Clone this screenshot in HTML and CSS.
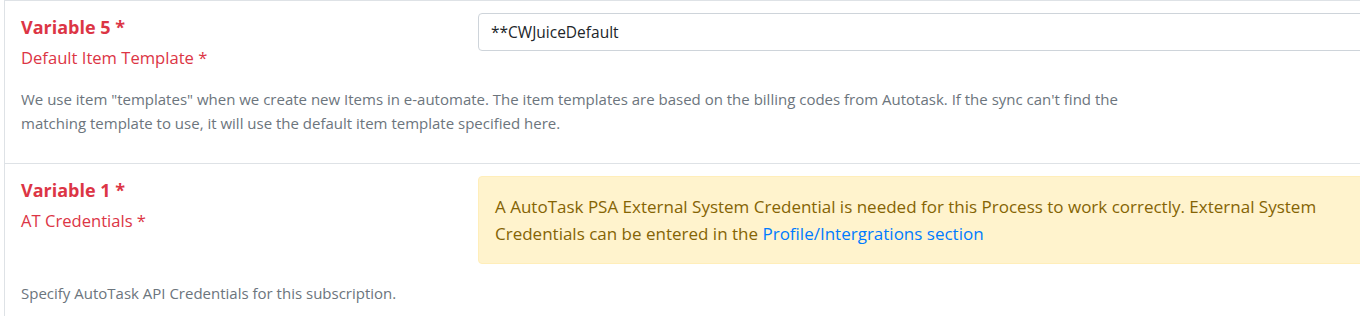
FILE: index.html
```html
<!DOCTYPE html>
<html lang="en">
<head>
    <meta charset="UTF-8">
    <meta name="viewport" content="width=device-width, initial-scale=1.0">
    <title>Process Variables</title>
    <link rel="stylesheet" href="styles.css">
</head>
<body>
    <div class="variables">
        <!-- Variable 5 -->
        <div class="variable-card">
            <div class="variable-row">
                <div class="variable-label">
                    <h5 class="variable-title">Variable 5 *</h5>
                    <label class="variable-name" for="defaultTemplate">Default Item Template *</label>
                </div>
                <div class="variable-field">
                    <input type="text" id="defaultTemplate" class="form-input" value="**CWJuiceDefault">
                </div>
            </div>
            <p class="variable-help">We use item "templates" when we create new Items in e-automate. The item templates are based on the billing codes from Autotask. If the sync can't find the matching template to use, it will use the default item template specified here.</p>
        </div>

        <!-- Variable 1 -->
        <div class="variable-card second">
            <div class="variable-row">
                <div class="variable-label">
                    <h5 class="variable-title">Variable 1 *</h5>
                    <div class="variable-name">AT Credentials *</div>
                </div>
                <div class="variable-field">
                    <div class="alert-warning">A AutoTask PSA External System Credential is needed for this Process to work correctly. External System Credentials can be entered in the <a href="#">Profile/Intergrations section</a></div>
                </div>
            </div>
            <p class="variable-help">Specify AutoTask API Credentials for this subscription.</p>
        </div>
    </div>
</body>
</html>
```

FILE: styles.css
```css
body {
    font-family: 'Open Sans', sans-serif;
    margin: 0;
    padding: 0;
    background-color: #fff;
    overflow: hidden;
}

.variables {
    padding-left: 4px;
    width: 1400px;
}

.variable-card {
    border: 1px solid #dee2e6;
    border-right: none;
    padding: 0 16px;
}

.variable-card.second {
    border-top: none;
}

.variable-row {
    display: flex;
}

.variable-label {
    width: 457px;
    flex-shrink: 0;
    padding-top: 15px;
}

.variable-title {
    margin: 0 0 7px;
    font-size: 18px;
    font-weight: bold;
    line-height: 23px;
    color: #dc3545;
}

.variable-name {
    display: block;
    font-size: 16.6px;
    line-height: 24px;
    color: #dc3545;
}

.variable-field {
    flex: 1;
    padding-top: 12px;
}

.form-input {
    width: 100%;
    height: 38px;
    box-sizing: border-box;
    padding: 6px 12px;
    border: 1px solid #ced4da;
    border-radius: 4px;
    font-family: inherit;
    font-size: 15.5px;
    color: #212529;
    outline: none;
}

.alert-warning {
    background-color: #fff3cd;
    border: 1px solid #ffeeba;
    border-radius: 4px;
    padding: 16px 16px;
    font-size: 17px;
    line-height: 27px;
    color: #856404;
}

.alert-warning a {
    color: #007bff;
    text-decoration: none;
}

.variable-help {
    margin: 17px 0 28px;
    font-size: 15px;
    line-height: 24px;
    color: #6c757d;
    max-width: 1100px;
}
```
